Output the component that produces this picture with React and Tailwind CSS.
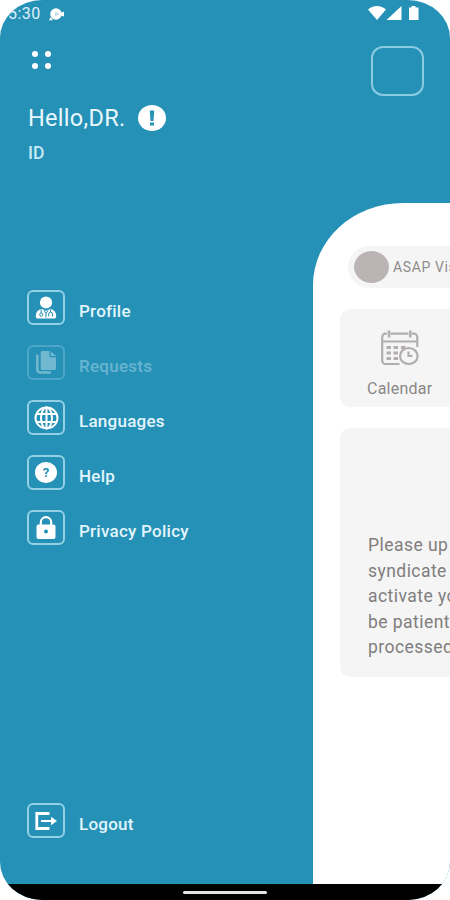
const ProfileIcon = () => (
  <svg width="22" height="24" viewBox="0 0 22 24" fill="#fff">
    <ellipse cx="11" cy="6.600" rx="6.100" ry="6" />
    <path d="M2.500 22.500Q.8 22.500.8 20.500C.8 16 3 13.500 7 13l4 2 4-2c4 .5 6.200 3 6.200 7.500q0 2-1.700 2z" />
    <g fill="none" stroke="#2591b7" strokeWidth="1">
      <path d="M6.200 13.500V17" />
      <circle cx="6.200" cy="18.600" r="1.600" />
      <path d="M15.500 13.500v2.500M13.700 20.500V18q0-1.800 1.900-1.800t1.900 1.800v2.500" />
      <path d="M9 14.500l2 3 2-3M11 17.500v4" />
    </g>
  </svg>
);

const RequestsIcon = () => (
  <svg width="20" height="23" viewBox="0 0 20 23" fill="#fff">
    <path d="M1.300 3.500v15a3 3 0 0 0 3 3H15" fill="none" stroke="#fff" strokeWidth="2.600" />
    <path d="M6.200 0H13.500v6.200H20v11.300a1.500 1.500 0 0 1-1.500 1.500H6.200a1.500 1.500 0 0 1-1.500-1.500v-16A1.500 1.500 0 0 1 6.200 0z" />
    <path d="M14.800.2 20 5h-5.200z" />
  </svg>
);

const LanguagesIcon = () => (
  <svg width="25" height="24" viewBox="0 0 25 24" fill="none" stroke="#fff" strokeWidth="2">
    <ellipse cx="12.500" cy="12" rx="11" ry="10.400" />
    <ellipse cx="12.500" cy="12" rx="5.500" ry="10.400" />
    <path d="M2.500 8h20M2.500 16h20M12.500 1.500v21" />
  </svg>
);

const HelpIcon = () => (
  <span className="flex h-[21px] w-[22px] items-center justify-center rounded-[50%] bg-white text-[13px] leading-none font-bold text-[#2591b7]">
    ?
  </span>
);

const PrivacyIcon = () => (
  <svg width="20" height="24" viewBox="0 0 20 24" fill="#fff">
    <path d="M4.800 10V6.400a5.200 5.200 0 0 1 10.400 0V10" fill="none" stroke="#fff" strokeWidth="2.200" />
    <rect x="0.500" y="8.500" width="19" height="14.500" rx="2" />
    <circle cx="10" cy="15.500" r="2" fill="#2591b7" />
  </svg>
);

const LogoutIcon = () => (
  <svg width="22" height="18" viewBox="0 0 22 18" fill="none" stroke="#fff" strokeWidth="2.800">
    <path d="M14.500 1.500H1.800v15h12.700" />
    <path d="M6 9h11" strokeWidth="2.200" />
    <path d="M16 4.800 22 9l-6 4.200z" fill="#fff" stroke="none" />
  </svg>
);

const CalendarIcon = () => (
  <svg width="38" height="36" viewBox="0 0 38 36" fill="none" stroke="#b3aeae" strokeWidth="2.200">
    <path d="M18.500 34H4.500A3.300 3.300 0 0 1 1.200 30.700V7a3.300 3.300 0 0 1 3.300-3.300h1.500M9.500 3.700h18M31 3.700h2a3.300 3.300 0 0 1 3.300 3.300V17" />
    <path d="M1 11.500h35.500" />
    <path d="M8 .5v7M29.300.5v7" strokeWidth="2.600" />
    <path d="M5.500 17.500h4.500M12.500 17.500H17M20 17.500h4.500M5.500 23h4.500M12.500 23H17M5.500 28.500h4.500M12.500 28.500H17" strokeWidth="2.800" />
    <ellipse cx="27.800" cy="26" rx="8.800" ry="8" />
    <path d="M27.500 21.500V26h4" />
  </svg>
);

const menu = [
  { label: "Profile", Icon: ProfileIcon },
  { label: "Requests", Icon: RequestsIcon, disabled: true },
  { label: "Languages", Icon: LanguagesIcon },
  { label: "Help", Icon: HelpIcon },
  { label: "Privacy Policy", Icon: PrivacyIcon },
];

const message = [
  "Please up",
  "syndicate",
  "activate yo",
  "be patient",
  "processed",
];

function MenuItem({ label, Icon, disabled }) {
  return (
    <button
      type="button"
      disabled={disabled}
      className={`flex h-[35px] items-center gap-[14px] ${disabled ? "opacity-35" : ""}`}
    >
      <span className="flex h-[35px] w-[38px] items-center justify-center rounded-md border-2 border-[#93cfe5]">
        <Icon />
      </span>
      <span className="pt-[7px] text-[17px] leading-5 font-medium tracking-[0.25px] text-[#e2f5fc]">
        {label}
      </span>
    </button>
  );
}

function StatusBar() {
  return (
    <div className="flex h-7 shrink-0 items-start justify-between pt-[5px] pr-[31px] pl-[8px]">
      <div className="flex items-center gap-2">
        <span className="text-[16px] leading-[18px] tracking-[0.5px] text-[#dff2f9]">5:30</span>
        <svg width="16" height="13" viewBox="0 0 16 13" fill="#fff">
          <circle cx="7" cy="6" r="5.800" />
          <path d="M0 12.500l1.500-3.500L4 12zM12 5l3-1.500v5L12 7.500z" />
          <path d="M7 4v4M9 5v2" stroke="#8cc5db" strokeWidth="1" />
        </svg>
      </div>
      <svg width="51" height="16" viewBox="0 0 51 16" fill="#fff">
        <path d="M0 4.500C5-.3 13-.3 18 4.500L9 15z" />
        <path d="M33.500 1v14H18.500z" />
        <path d="M41 2.500h2.500V1h4v1.500H50.500V15H41z" />
      </svg>
    </div>
  );
}

export default function App() {
  return (
    <div className="h-[900px] w-[450px] overflow-hidden bg-white font-['Roboto','Liberation_Sans',sans-serif]">
      <div className="flex h-full flex-col overflow-hidden rounded-[42px/38px] bg-[#2591b7]">
        <StatusBar />

        <div className="flex min-h-0 flex-1">
          {/* Drawer */}
          <aside className="flex w-[313px] shrink-0 flex-col pl-[27px]">
            <div className="mt-[23px] ml-[5px] grid h-[18px] w-[19px] grid-cols-[6px_6px] content-between justify-between">
              <span className="h-[6px] rounded-[50%] bg-white" />
              <span className="h-[6px] rounded-[50%] bg-white" />
              <span className="h-[6px] rounded-[50%] bg-white" />
              <span className="h-[6px] rounded-[50%] bg-white" />
            </div>

            <div className="mt-[34px] flex h-[30px] items-center gap-[13px] pl-px">
              <h1 className="text-[23.500px] leading-[30px] tracking-[0.3px] text-[#e8f7fd]">Hello,DR.</h1>
              <svg width="28" height="26" viewBox="0 0 28 26" fill="#fff">
                <ellipse cx="14" cy="13" rx="14" ry="13" />
                <path d="M11.800 5.500h4.400l-.7 10.500h-3zM12 17.500h4v3h-4z" fill="#2591b7" />
              </svg>
            </div>
            <p className="mt-[10px] pl-px text-[17.500px] leading-5 font-medium text-[#c7eaf6]">ID</p>

            <nav className="mt-[127px] flex flex-col gap-5">
              {menu.map((item) => (
                <MenuItem key={item.label} {...item} />
              ))}
            </nav>

            <div className="mt-auto mb-[46px]">
              <MenuItem label="Logout" Icon={LogoutIcon} />
            </div>
          </aside>

          {/* Home screen pushed aside by the drawer */}
          <div className="flex min-w-0 flex-1 flex-col">
            <div className="mt-[18px] ml-[58px] h-[50px] w-[53px] shrink-0 rounded-xl border-2 border-[#8bcbe2]" />

            <main className="mt-[107px] flex-1 overflow-hidden rounded-tl-[90px_82px] bg-white pt-[43px] pl-[27px] whitespace-nowrap">
              <div className="ml-2 flex h-[42px] items-center gap-1 rounded-l-full bg-[#f5f5f5] pl-[6px]">
                <span className="h-8 w-[35px] shrink-0 rounded-[50%] bg-[#bab5b4]" />
                <span className="text-[14px] tracking-[0.6px] text-[#8f8c8c]">ASAP Vis</span>
              </div>

              <div className="mt-[21px] flex h-[98px] flex-col rounded-l-[10px] bg-[#f5f5f5] pt-[21px] pl-[27px]">
                <div className="pl-[14px]">
                  <CalendarIcon />
                </div>
                <span className="mt-[13px] text-[16px] leading-5 tracking-[0.25px] text-[#8a8787]">Calendar</span>
              </div>

              <div className="mt-[21px] h-[249px] overflow-hidden rounded-l-[10px] bg-[#f5f5f5] pt-[105px] pl-[28px] text-[17.500px] leading-[25.500px] tracking-[0.45px] text-[#7f7d7d]">
                {message.map((line) => (
                  <p key={line}>{line}</p>
                ))}
              </div>
            </main>
          </div>
        </div>

        <div className="flex h-4 shrink-0 items-center justify-center bg-black">
          <span className="h-[3px] w-[84px] rounded-full bg-[#e4e4e4]" />
        </div>
      </div>
    </div>
  );
}
